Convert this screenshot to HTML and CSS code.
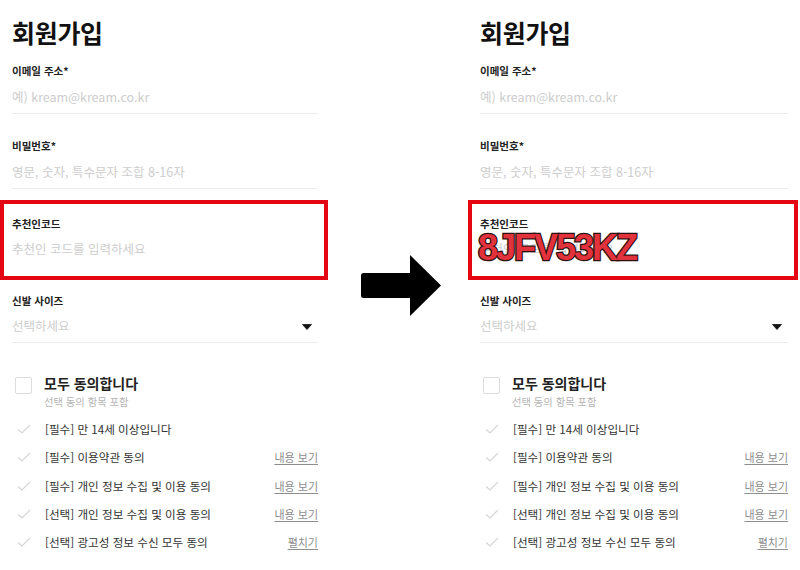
FILE: index.html
```
<!DOCTYPE html>
<html lang="ko">
<head>
<meta charset="utf-8">
<title>회원가입</title>
<link rel="stylesheet" href="styles.css">
</head>
<body>
<div class="page">
  <section class="panel panel-left">
    <h1 class="title">회원가입</h1>
    <div class="field">
      <div class="label">이메일 주소*</div>
      <div class="value">예) kream@kream.co.kr</div>
    </div>
    <div class="field">
      <div class="label">비밀번호*</div>
      <div class="value">영문, 숫자, 특수문자 조합 8-16자</div>
    </div>
    <div class="highlight">
      <div class="label">추천인코드</div>
      <div class="value">추천인 코드를 입력하세요</div>
    </div>
    <div class="field field-select">
      <div class="label">신발 사이즈</div>
      <div class="value select-row"><span>선택하세요</span>
        <svg class="caret" width="10" height="6" viewBox="0 0 10 6"><path d="M0.5 0.5 H9.5 L5 5.5 Z" fill="#111" stroke="#111" stroke-width="0.8" stroke-linejoin="round"/></svg>
      </div>
    </div>
    <div class="agree-all">
      <span class="box"></span>
      <div class="agree-text">
        <div class="agree-title">모두 동의합니다</div>
        <div class="agree-sub">선택 동의 항목 포함</div>
      </div>
    </div>
    <ul class="terms">
      <li><svg class="check" width="14" height="10" viewBox="0 0 14 10"><path d="M1 5.5 L5 9 L13 1" fill="none" stroke="#d6d6d6" stroke-width="1.2"/></svg><span class="term">[필수] 만 14세 이상입니다</span></li>
      <li><svg class="check" width="14" height="10" viewBox="0 0 14 10"><path d="M1 5.5 L5 9 L13 1" fill="none" stroke="#d6d6d6" stroke-width="1.2"/></svg><span class="term">[필수] 이용약관 동의</span><a class="more">내용 보기</a></li>
      <li><svg class="check" width="14" height="10" viewBox="0 0 14 10"><path d="M1 5.5 L5 9 L13 1" fill="none" stroke="#d6d6d6" stroke-width="1.2"/></svg><span class="term">[필수] 개인 정보 수집 및 이용 동의</span><a class="more">내용 보기</a></li>
      <li><svg class="check" width="14" height="10" viewBox="0 0 14 10"><path d="M1 5.5 L5 9 L13 1" fill="none" stroke="#d6d6d6" stroke-width="1.2"/></svg><span class="term">[선택] 개인 정보 수집 및 이용 동의</span><a class="more">내용 보기</a></li>
      <li><svg class="check" width="14" height="10" viewBox="0 0 14 10"><path d="M1 5.5 L5 9 L13 1" fill="none" stroke="#d6d6d6" stroke-width="1.2"/></svg><span class="term">[선택] 광고성 정보 수신 모두 동의</span><a class="more">펼치기</a></li>
    </ul>
  </section>

  <div class="arrow-col">
    <svg class="arrow" width="80" height="62" viewBox="0 0 80 62"><rect x="0" y="18" width="54" height="25" rx="2.5" fill="#000"/><path d="M49 0 L80 30.5 L49 61 Z" fill="#000"/></svg>
  </div>

  <section class="panel panel-right">
    <h1 class="title">회원가입</h1>
    <div class="field">
      <div class="label">이메일 주소*</div>
      <div class="value">예) kream@kream.co.kr</div>
    </div>
    <div class="field">
      <div class="label">비밀번호*</div>
      <div class="value">영문, 숫자, 특수문자 조합 8-16자</div>
    </div>
    <div class="highlight highlight-wide">
      <div class="label">추천인코드</div>
      <div class="value">추천인 코드를 입력하세요</div>
      <div class="code">8JFV53KZ</div>
    </div>
    <div class="field field-select">
      <div class="label">신발 사이즈</div>
      <div class="value select-row"><span>선택하세요</span>
        <svg class="caret" width="10" height="6" viewBox="0 0 10 6"><path d="M0.5 0.5 H9.5 L5 5.5 Z" fill="#111" stroke="#111" stroke-width="0.8" stroke-linejoin="round"/></svg>
      </div>
    </div>
    <div class="agree-all">
      <span class="box"></span>
      <div class="agree-text">
        <div class="agree-title">모두 동의합니다</div>
        <div class="agree-sub">선택 동의 항목 포함</div>
      </div>
    </div>
    <ul class="terms">
      <li><svg class="check" width="14" height="10" viewBox="0 0 14 10"><path d="M1 5.5 L5 9 L13 1" fill="none" stroke="#d6d6d6" stroke-width="1.2"/></svg><span class="term">[필수] 만 14세 이상입니다</span></li>
      <li><svg class="check" width="14" height="10" viewBox="0 0 14 10"><path d="M1 5.5 L5 9 L13 1" fill="none" stroke="#d6d6d6" stroke-width="1.2"/></svg><span class="term">[필수] 이용약관 동의</span><a class="more">내용 보기</a></li>
      <li><svg class="check" width="14" height="10" viewBox="0 0 14 10"><path d="M1 5.5 L5 9 L13 1" fill="none" stroke="#d6d6d6" stroke-width="1.2"/></svg><span class="term">[필수] 개인 정보 수집 및 이용 동의</span><a class="more">내용 보기</a></li>
      <li><svg class="check" width="14" height="10" viewBox="0 0 14 10"><path d="M1 5.5 L5 9 L13 1" fill="none" stroke="#d6d6d6" stroke-width="1.2"/></svg><span class="term">[선택] 개인 정보 수집 및 이용 동의</span><a class="more">내용 보기</a></li>
      <li><svg class="check" width="14" height="10" viewBox="0 0 14 10"><path d="M1 5.5 L5 9 L13 1" fill="none" stroke="#d6d6d6" stroke-width="1.2"/></svg><span class="term">[선택] 광고성 정보 수신 모두 동의</span><a class="more">펼치기</a></li>
    </ul>
  </section>
</div>
</body>
</html>
```
FILE: styles.css
```
* { box-sizing: border-box; }
html, body { margin: 0; padding: 0; background: #fff; }
body {
  font-family: "Noto Sans CJK KR", "Noto Sans", sans-serif;
  color: #222;
}
.page {
  display: flex;
  width: 800px;
  height: 570px;
  overflow: hidden;
}
.panel {
  flex: none;
  display: flex;
  flex-direction: column;
}
.panel-left { width: 330px; }
.panel-right { width: 332px; }
.arrow-col {
  flex: none;
  width: 138px;
  padding-top: 255px;
  padding-left: 31px;
}
.arrow { display: block; }

.title {
  margin: 14px 12px 0;
  font-size: 25px;
  line-height: 36px;
  font-weight: 700;
  color: #111;
  letter-spacing: -0.3px;
}
.field {
  margin: 13px 12px 0;
  padding-bottom: 6px;
  border-bottom: 1px solid #ececec;
}
.field + .field { margin-top: 24px; }
.label {
  font-size: 10.5px;
  line-height: 16px;
  font-weight: 700;
  color: #222;
}
.value {
  margin-top: 8px;
  font-size: 12.5px;
  line-height: 20px;
  color: #cdcdcd;
}
.highlight {
  position: relative;
  margin: 11px 2px 0 0;
  border: 4px solid #e30613;
  padding: 12px 6px 17px 8px;
}
.highlight .value { margin-top: 7px; }
.highlight-wide { margin-right: 2px; padding-right: 8px; }
.code {
  position: absolute;
  left: 6px;
  top: 29px;
  font-family: "Liberation Sans", Arial, sans-serif;
  font-weight: 700;
  font-size: 36px;
  line-height: 30px;
  letter-spacing: -2px;
  color: #e2323b;
  -webkit-text-stroke: 2.5px #2b1212;
  paint-order: stroke fill;
}
.field-select { margin-top: 13px; }
.field-select .value { margin-top: 7px; }
.select-row {
  display: flex;
  align-items: center;
  justify-content: space-between;
  padding-right: 6px;
}
.caret { display: block; margin-top: 1px; }

.agree-all {
  display: flex;
  align-items: flex-start;
  margin: 30px 12px 0 15px;
}
.box {
  flex: none;
  width: 17px;
  height: 17px;
  margin-top: 4px;
  border: 1.5px solid #dcdcdc;
  border-radius: 2px;
}
.agree-text { margin-left: 12px; }
.agree-title {
  font-size: 14px;
  line-height: 20px;
  font-weight: 700;
  color: #222;
}
.agree-sub {
  margin-top: 2px;
  font-size: 10.3px;
  line-height: 14px;
  color: #b5b5b5;
}
.terms {
  list-style: none;
  margin: 6px 12px 0 17px;
  padding: 0;
}
.terms li {
  display: flex;
  align-items: center;
  height: 28.3px;
}
.check { flex: none; display: block; }
.term {
  margin-left: 14px;
  font-size: 11.6px;
  color: #333;
  flex: 1;
}
.more {
  font-size: 11px;
  color: #8e8e8e;
  text-decoration: underline;
  text-underline-offset: 2px;
}
```
